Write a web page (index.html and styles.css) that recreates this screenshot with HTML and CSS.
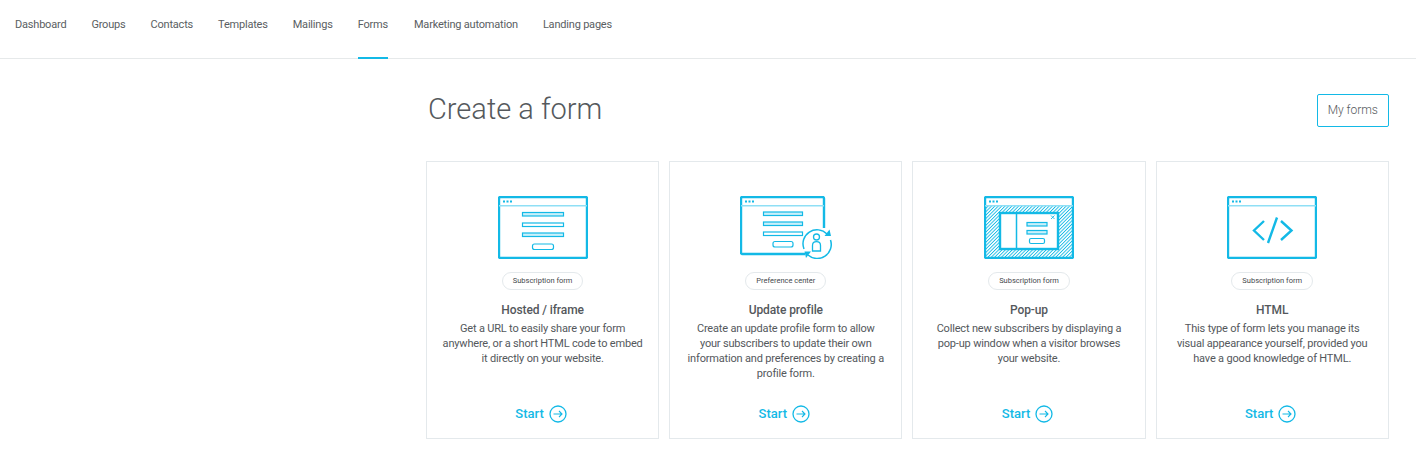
FILE: index.html
```html
<!DOCTYPE html>
<html lang="en">
<head>
<meta charset="utf-8">
<title>Create a form</title>
<link rel="stylesheet" href="styles.css">
</head>
<body>
<svg class="defs" width="0" height="0" aria-hidden="true">
  <defs>
    <pattern id="hatch" width="2.400" height="2.400" patternUnits="userSpaceOnUse" patternTransform="rotate(45)">
      <rect width="0.900" height="2.400" fill="#13b9e6"/>
    </pattern>
    <g id="win">
      <rect x="1" y="1" width="88" height="61" rx="1.500" fill="none" stroke="#13b9e6" stroke-width="2.400"/>
      <path d="M1 9.700H89" stroke="#8fdff5" stroke-width="1.500"/>
      <path d="M5 5.500h2M8.500 5.500h2M12 5.500h2" stroke="#13b9e6" stroke-width="2"/>
    </g>
    <g id="arrowc">
      <circle cx="9" cy="9" r="8" fill="none" stroke="#13b9e6" stroke-width="1.300"/>
      <path d="M4.500 9H13M10 6l3 3-3 3" fill="none" stroke="#13b9e6" stroke-width="1.100"/>
    </g>
  </defs>
</svg>
<nav class="nav">
  <a class="nav-item">Dashboard</a>
  <a class="nav-item">Groups</a>
  <a class="nav-item">Contacts</a>
  <a class="nav-item">Templates</a>
  <a class="nav-item">Mailings</a>
  <a class="nav-item active">Forms</a>
  <a class="nav-item">Marketing automation</a>
  <a class="nav-item">Landing pages</a>
</nav>
<main class="main">
  <header class="head">
    <h1 class="title">Create a form</h1>
    <a class="btn">My forms</a>
  </header>
  <section class="cards">
    <article class="card">
      <svg class="ill" width="90" height="63" viewBox="0 0 90 63">
        <use href="#win"/>
        <g fill="none" stroke="#13b9e6" stroke-width="1.200">
          <rect x="24.500" y="16.500" width="41" height="3.500" fill="#c9f0fa"/>
          <rect x="24.500" y="27" width="41" height="3.500" fill="#fff"/>
          <rect x="24.500" y="37" width="41" height="3.500" fill="#c9f0fa"/>
          <rect x="34.500" y="48" width="21" height="5.500" rx="2"/>
        </g>
      </svg>
      <span class="tag">Subscription form</span>
      <h2 class="name">Hosted / iframe</h2>
      <p class="desc">Get a URL to easily share your form anywhere, or a short HTML code to embed it directly on your website.</p>
      <a class="start">Start <svg width="18" height="18" viewBox="0 0 18 18"><use href="#arrowc"/></svg></a>
    </article>
    <article class="card">
      <svg class="ill" width="92" height="63" viewBox="0 0 92 63">
        <path d="M65 58H2.500A1.500 1.500 0 0 1 1 56.500V2.500A1.500 1.500 0 0 1 2.500 1H82.500A1.500 1.500 0 0 1 84 2.500V32" fill="none" stroke="#13b9e6" stroke-width="2.400"/>
        <path d="M1 9.700H84" stroke="#8fdff5" stroke-width="1.500"/>
        <path d="M5 5.500h2M8.500 5.500h2M12 5.500h2" stroke="#13b9e6" stroke-width="2"/>
        <g fill="none" stroke="#13b9e6" stroke-width="1.200">
          <rect x="23.500" y="16" width="39" height="3.500" fill="#c9f0fa"/>
          <rect x="23.500" y="26" width="39" height="3.500" fill="#c9f0fa"/>
          <rect x="23.500" y="36" width="39" height="3.500" fill="#fff"/>
          <rect x="33" y="45.500" width="20" height="5.500" rx="2"/>
        </g>
        <g fill="none" stroke="#13b9e6">
          <path d="M64 53A14 14 0 0 1 87 38M90.500 44A14 14 0 0 1 68 59" stroke-width="1.500"/>
          <circle cx="76.500" cy="41" r="3" stroke-width="1.300"/>
          <path d="M72.500 55V49.500Q72.500 45.700 76.500 45.700Q80.500 45.700 80.500 49.500V55Z" stroke-width="1.300"/>
        </g>
        <path d="M84.500 40L91 40L89.500 33.500ZM71 55.500L64.500 55.500L66 62Z" fill="#13b9e6"/>
      </svg>
      <span class="tag">Preference center</span>
      <h2 class="name">Update profile</h2>
      <p class="desc">Create an update profile form to allow your subscribers to update their own information and preferences by creating a profile form.</p>
      <a class="start">Start <svg width="18" height="18" viewBox="0 0 18 18"><use href="#arrowc"/></svg></a>
    </article>
    <article class="card">
      <svg class="ill" width="90" height="63" viewBox="0 0 90 63">
        <rect x="1" y="10" width="88" height="52" fill="url(#hatch)"/>
        <use href="#win"/>
        <rect x="16" y="17" width="58" height="36" fill="#fff" stroke="#13b9e6" stroke-width="2.400"/>
        <path d="M32.500 17V53" stroke="#13b9e6" stroke-width="1.500"/>
        <g fill="none" stroke="#13b9e6" stroke-width="1.200">
          <rect x="43" y="26.500" width="20" height="3.500" fill="#c9f0fa"/>
          <rect x="43" y="34.500" width="20" height="3.500" fill="#c9f0fa"/>
          <rect x="45.500" y="42.500" width="15" height="5" rx="1.500"/>
        </g>
        <path d="M67 19.500l3.500 3.500M70.500 19.500l-3.500 3.500" fill="none" stroke="#13b9e6" stroke-width="0.900"/>
      </svg>
      <span class="tag">Subscription form</span>
      <h2 class="name">Pop-up</h2>
      <p class="desc">Collect new subscribers by displaying a pop-up window when a visitor browses your website.</p>
      <a class="start">Start <svg width="18" height="18" viewBox="0 0 18 18"><use href="#arrowc"/></svg></a>
    </article>
    <article class="card">
      <svg class="ill" width="90" height="63" viewBox="0 0 90 63">
        <use href="#win"/>
        <g fill="none" stroke="#13b9e6" stroke-width="2.400">
          <path d="M37 25L27 34.500L37 44M54 25L64.500 34.500L54 44M50 21.500L41 47"/>
        </g>
      </svg>
      <span class="tag">Subscription form</span>
      <h2 class="name">HTML</h2>
      <p class="desc">This type of form lets you manage its visual appearance yourself, provided you have a good knowledge of HTML.</p>
      <a class="start">Start <svg width="18" height="18" viewBox="0 0 18 18"><use href="#arrowc"/></svg></a>
    </article>
  </section>
</main>
</body>
</html>
```
FILE: styles.css
```css
* { box-sizing: border-box; }
html, body { margin: 0; padding: 0; }
body {
  background: #fff;
  color: #54585c;
  font-family: Roboto, "Liberation Sans", sans-serif;
  height: 453px;
  overflow: hidden;
}
.defs { position: absolute; }
.nav {
  display: flex;
  gap: 25px;
  height: 59px;
  padding-left: 15px;
  border-bottom: 1px solid #e6e9ea;
}
.nav-item {
  font-size: 11px;
  letter-spacing: -0.2px;
  line-height: 49px;
  height: 59px;
  color: #5a5e62;
}
.active {
  border-bottom: 2px solid #13b9e6;
  margin-right: 1px;
}
.main {
  width: 962.800px;
  margin-left: 426px;
}
.head {
  display: flex;
  justify-content: space-between;
  align-items: center;
  padding: 35px 0 34px;
}
.title {
  margin: -3px 0 0 2px;
  font-size: 29px;
  font-weight: 300;
  line-height: 33px;
  color: #55595d;
}
.btn {
  display: block;
  width: 72px;
  height: 33px;
  border: 1px solid #13b9e6;
  border-radius: 2px;
  text-align: center;
  font-size: 12px;
  font-weight: 300;
  letter-spacing: -0.05px;
  line-height: 31px;
  color: #55595d;
}
.cards {
  display: grid;
  grid-template-columns: repeat(4, 1fr);
  gap: 10px;
}
.card {
  height: 278px;
  border: 1px solid #e4e9ec;
  display: flex;
  flex-direction: column;
  align-items: center;
  padding: 34px 13px 0;
  text-align: center;
}
.ill { display: block; flex: none; }
.tag {
  margin-top: 13px;
  height: 18px;
  line-height: 16px;
  padding: 0 10px;
  border: 1px solid #e4e9ec;
  border-radius: 9px;
  font-size: 7.500px;
  color: #44484c;
}
.name {
  margin: 12px 0 0;
  font-size: 12px;
  font-weight: 500;
  letter-spacing: -0.1px;
  line-height: 16px;
  color: #54585c;
}
.desc {
  margin: 3px 0 0;
  width: 200.500px;
  font-size: 11px;
  letter-spacing: -0.18px;
  line-height: 15px;
  height: 60px;
  color: #54585c;
}
.start {
  margin: 24px 3px 0 0;
  display: flex;
  align-items: center;
  gap: 5px;
  font-size: 13px;
  font-weight: 500;
  line-height: 18px;
  color: #13b9e6;
}
```
